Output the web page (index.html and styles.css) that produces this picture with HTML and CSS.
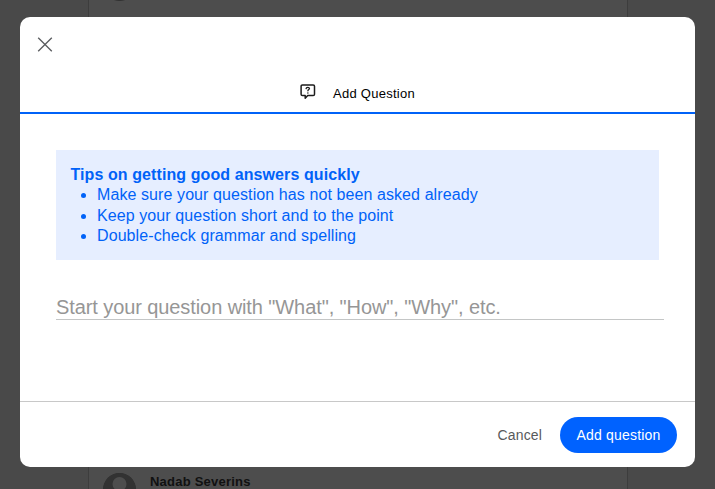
FILE: index.html
```html
<!DOCTYPE html>
<html lang="en">
<head>
<meta charset="utf-8">
<title>Add Question</title>
<link rel="stylesheet" href="styles.css">
</head>
<body>
<main class="feed">
  <div class="post post-first">
    <span class="avatar"></span>
  </div>
  <div class="post">
    <svg class="avatar" viewBox="0 0 33 33"><circle cx="16.5" cy="16.5" r="16.5" fill="#323232"/><circle cx="16.5" cy="11" r="7" fill="#4d4d4d"/></svg>
    <span class="author">Nadab Severins</span>
  </div>
</main>
<div class="overlay">
  <section class="modal" role="dialog">
    <header class="modal-head">
      <button class="close" aria-label="Close">
        <svg width="16" height="16" viewBox="0 0 16 16" fill="none" stroke="#5b5d60" stroke-width="1.35"><path d="M1.2.7l13.6 13.6M14.800.7L1.200 14.300"/></svg>
      </button>
      <div class="tab">
        <svg width="16" height="16" viewBox="0 0 16 16" fill="none" stroke="#1c1c1c" stroke-width="1.5" stroke-linejoin="round" stroke-linecap="round"><path d="M2.400 1h10.800q1.300 0 1.300 1.300v8q0 1.300-1.300 1.300H7.700L5.200 14.200v-2.600H2.400q-1.300 0-1.300-1.300v-8Q1.100 1 2.400 1z"/><path d="M6.100 4.600q.1-1.300 1.700-1.300t1.700 1.200c0 1.100-1.600 1-1.600 2.300" stroke-width="1.300"/><path d="M7.900 8.900v.05" stroke-width="1.500"/></svg>
        <span>Add Question</span>
      </div>
    </header>
    <div class="modal-body">
      <div class="tips">
        <strong>Tips on getting good answers quickly</strong>
        <ul>
          <li>Make sure your question has not been asked already</li>
          <li>Keep your question short and to the point</li>
          <li>Double-check grammar and spelling</li>
        </ul>
      </div>
      <input class="question" placeholder='Start your question with "What", "How", "Why", etc.'>
    </div>
    <footer class="modal-foot">
      <button class="cancel">Cancel</button>
      <button class="submit">Add question</button>
    </footer>
  </section>
</div>
</body>
</html>
```
FILE: styles.css
```css
* { box-sizing: border-box; }

body {
  margin: 0;
  height: 489px;
  overflow: hidden;
  background: #494949;
  font-family: "Liberation Sans", Arial, sans-serif;
}

button { border: 0; padding: 0; background: none; font-family: inherit; }

.feed {
  width: 540px;
  height: 489px;
  margin-left: 88px;
  border: solid #3d3d3d;
  border-width: 0 1px;
  background: #4d4d4d;
  overflow: hidden;
}

.post {
  display: flex;
  gap: 14px;
  padding-left: 14px;
}

.post-first { height: 505px; margin-top: -32px; }

.avatar {
  flex: none;
  width: 33px;
  height: 33px;
  border-radius: 50%;
  background: #323232;
}

.author {
  margin-top: 1px;
  font-size: 13px;
  font-weight: 700;
  line-height: 16px;
  letter-spacing: 0.22px;
  color: #111;
}

.overlay {
  position: absolute;
  inset: 0;
  padding: 17px 20px 22px;
}

.modal {
  display: flex;
  flex-direction: column;
  height: 450px;
  border-radius: 10px;
  background: #fff;
}

.modal-head {
  height: 97px;
  padding-top: 20px;
  border-bottom: 2px solid #0062f8;
}

.close { display: block; width: 16px; height: 16px; margin-left: 17px; }
.close svg, .tab svg { display: block; }

.tab {
  display: flex;
  justify-content: center;
  gap: 17px;
  margin-top: 31px;
  font-size: 13px;
  line-height: 20px;
  letter-spacing: 0.25px;
  color: #000;
}

.modal-body { flex: 1; padding: 36px 31px 0 36px; }

.tips {
  width: 603px;
  height: 110px;
  padding: 15px 14.5px;
  background: #e6eeff;
  color: #0062f8;
  font-size: 16px;
  line-height: 20.3px;
  letter-spacing: 0.09px;
}

.tips strong { display: block; }
.tips ul { margin: 0; padding-left: 26.5px; }

.question {
  display: block;
  width: 100%;
  height: 27px;
  margin-top: 33px;
  padding: 2px 0 0;
  border: 0;
  border-bottom: 1px solid #c4c6c6;
  font-family: inherit;
  font-size: 20px;
  letter-spacing: -0.09px;
}

.question::placeholder { color: #969696; opacity: 1; }

.modal-foot {
  display: flex;
  align-items: center;
  justify-content: flex-end;
  gap: 18px;
  height: 66px;
  padding-right: 18px;
  border-top: 1px solid #c8c8c8;
}

.cancel { font-size: 14px; letter-spacing: 0.15px; color: #58595b; }

.submit {
  width: 117px;
  height: 36px;
  border-radius: 18px;
  background: #0062ff;
  color: #fff;
  font-size: 14px;
  letter-spacing: 0.2px;
}
```
